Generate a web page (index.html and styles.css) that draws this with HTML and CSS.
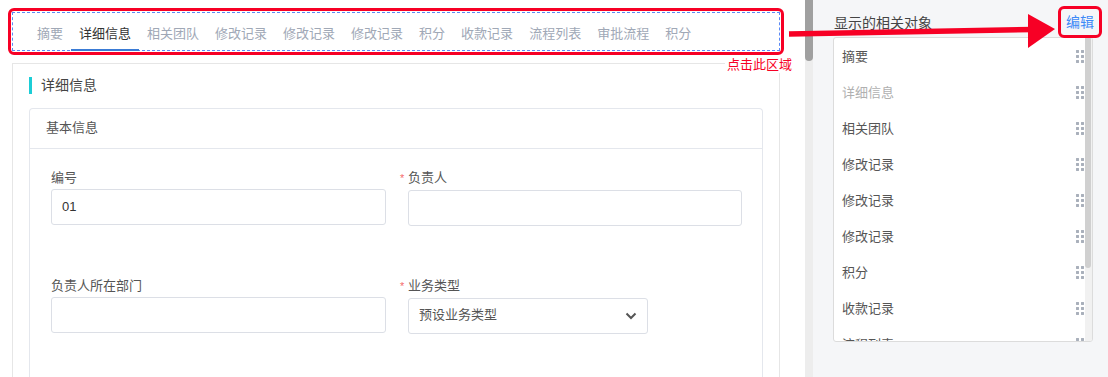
FILE: index.html
```html
<!DOCTYPE html>
<html lang="zh-CN">
<head>
<meta charset="utf-8">
<title>详细信息</title>
<link rel="stylesheet" href="styles.css">
</head>
<body>
<div class="page">
  <main class="main">
    <div class="tabs-frame">
      <nav class="tabs">
        <span class="tab">摘要</span>
        <span class="tab active">详细信息</span>
        <span class="tab">相关团队</span>
        <span class="tab">修改记录</span>
        <span class="tab">修改记录</span>
        <span class="tab">修改记录</span>
        <span class="tab">积分</span>
        <span class="tab">收款记录</span>
        <span class="tab">流程列表</span>
        <span class="tab">审批流程</span>
        <span class="tab">积分</span>
      </nav>
    </div>
    <section class="card">
      <h2 class="card-title">详细信息</h2>
      <div class="panel">
        <div class="panel-head">基本信息</div>
        <div class="panel-body">
          <div class="field">
            <label class="label">编号</label>
            <div class="input">01</div>
          </div>
          <div class="field">
            <label class="label"><span class="req">*</span>负责人</label>
            <div class="input"></div>
          </div>
          <div class="field">
            <label class="label">负责人所在部门</label>
            <div class="input"></div>
          </div>
          <div class="field">
            <label class="label"><span class="req">*</span>业务类型</label>
            <div class="input select">
              <span>预设业务类型</span>
              <svg class="chev" width="12" height="8" viewBox="0 0 12 8"><path d="M1.5 1.5 L6 6 L10.5 1.5" fill="none" stroke="#555" stroke-width="2"/></svg>
            </div>
          </div>
        </div>
      </div>
    </section>
  </main>
  <div class="scrollbar"><div class="scrollbar-thumb"></div></div>
  <aside class="side">
    <div class="side-head">
      <span class="side-title">显示的相关对象</span>
      <span class="edit">编辑</span>
    </div>
    <div class="list-card">
      <ul class="list">
        <li class="item"><span>摘要</span><i class="grip"></i></li>
        <li class="item disabled"><span>详细信息</span><i class="grip"></i></li>
        <li class="item"><span>相关团队</span><i class="grip"></i></li>
        <li class="item"><span>修改记录</span><i class="grip"></i></li>
        <li class="item"><span>修改记录</span><i class="grip"></i></li>
        <li class="item"><span>修改记录</span><i class="grip"></i></li>
        <li class="item"><span>积分</span><i class="grip"></i></li>
        <li class="item"><span>收款记录</span><i class="grip"></i></li>
        <li class="item"><span>流程列表</span><i class="grip"></i></li>
        <li class="item"><span>审批流程</span><i class="grip"></i></li>
        <li class="item"><span>积分</span><i class="grip"></i></li>
      </ul>
      <div class="list-scroll"><div class="list-thumb"></div></div>
    </div>
  </aside>

  <span class="hint">点击此区域</span>
  <svg class="arrow" width="1108" height="60" viewBox="0 0 1108 60">
    <line x1="789" y1="34" x2="1034" y2="29.5" stroke="#f70025" stroke-width="5.5"/>
    <polygon points="1028,14 1055,29 1028,48" fill="#f70025"/>
  </svg>
</div>
</body>
</html>
```

FILE: styles.css
```css
* { box-sizing: border-box; }
html, body { margin: 0; padding: 0; }
body {
  font-family: "Liberation Sans", "Noto Sans CJK SC", sans-serif;
  font-size: 13px;
  color: #333;
  background: #fff;
}
.page {
  position: relative;
  display: flex;
  width: 1108px;
  height: 377px;
  overflow: hidden;
}
.main {
  width: 805px;
  flex: none;
  background: #fff;
  overflow: hidden;
}
.tabs-frame {
  margin: 8px 21px 0 8px;
  border: 3px solid #f70025;
  border-radius: 6px;
  padding: 1px;
}
.tabs {
  display: flex;
  align-items: flex-start;
  border: 1px dashed #5b8af5;
  padding-left: 16px;
  height: 39px;
}
.tab {
  position: relative;
  padding: 12px 8px 6px;
  line-height: 18px;
  font-size: 13px;
  color: #a0a8b6;
  border-bottom: 2px solid transparent;
  white-space: nowrap;
}
.tab.active {
  color: #333;
  border-bottom-color: #3a7bd5;
}
.card {
  margin: 8px 25px 0 12px;
  border: 1px solid #e6e6e6;
  border-bottom: none;
  padding: 13px 16px 0;
  height: 320px;
}
.card-title {
  margin: 0;
  font-size: 14px;
  font-weight: normal;
  line-height: 17px;
  color: #444;
  border-left: 3px solid #1ccdd6;
  padding-left: 9px;
}
.panel {
  margin-top: 14px;
  border: 1px solid #e4e7ed;
  border-bottom: none;
  border-radius: 4px 4px 0 0;
  height: 280px;
}
.panel-head {
  height: 40px;
  line-height: 38px;
  border-bottom: 1px solid #e4e7ed;
  padding-left: 16px;
  color: #555;
  font-size: 13px;
}
.panel-body {
  display: grid;
  grid-template-columns: 335px 334px;
  column-gap: 22px;
  row-gap: 51px;
  padding: 20px 22px 0 21px;
}
.field { display: flex; flex-direction: column; align-items: flex-start; }
.label {
  font-size: 13px;
  line-height: 17px;
  color: #555;
  margin-bottom: 3px;
}
.req {
  color: #f56c6c;
  font-size: 11px;
  margin-left: -8px;
  display: inline-block;
  width: 8px;
}
.input {
  width: 100%;
  height: 36px;
  border: 1px solid #dcdfe6;
  border-radius: 3px;
  padding: 0 10px;
  line-height: 33px;
  font-size: 13px;
  color: #333;
  background: #fff;
}
.select {
  width: 240px;
  display: flex;
  align-items: center;
  justify-content: space-between;
  color: #555;
}
.select span { line-height: 18px; margin-top: -2px; }
.chev { display: block; }
.scrollbar {
  width: 8px;
  flex: none;
  background: #ededed;
}
.scrollbar-thumb {
  height: 61px;
  background: #a0a0a0;
  border-radius: 0 0 4px 4px;
}
.side {
  flex: 1;
  background: #f5f6f8;
  padding: 13px 15px 0 20px;
}
.side-head {
  display: flex;
  justify-content: space-between;
  align-items: flex-start;
  height: 20px;
  margin-bottom: 4px;
}
.side-title {
  font-size: 14px;
  line-height: 20px;
  color: #444;
  padding-left: 1px;
}
.edit {
  font-size: 14px;
  line-height: 20px;
  color: #3d8af7;
  border: 3px solid #f70025;
  border-radius: 6px;
  padding: 3px 5px;
  margin: -7px -9px 0 0;
  background: #f5f6f8;
  position: relative;
  z-index: 2;
}
.list-card {
  display: flex;
  height: 305px;
  width: 260px;
  background: #fff;
  border: 1px solid #dcdcdc;
  border-radius: 3px;
  overflow: hidden;
}
.list {
  flex: 1;
  margin: 0;
  padding: 0;
  list-style: none;
  overflow: hidden;
}
.item {
  height: 36px;
  display: flex;
  align-items: center;
  justify-content: space-between;
  padding: 0 1px 2px 8px;
  font-size: 13px;
  color: #555;
}
.item.disabled { color: #b0b0b0; }
.grip {
  width: 8px;
  height: 13px;
  margin-top: 3px;
  background-image: radial-gradient(circle, #a9b0bb 1.4px, transparent 1.6px);
  background-size: 5px 5px;
  background-position: -1px -1px;
}
.list-scroll {
  width: 7px;
  flex: none;
  background: #f1f1f1;
}
.list-thumb {
  width: 6px;
  height: 230px;
  background: #d0d0d0;
  border-radius: 0 0 3px 3px;
}
.hint {
  position: absolute;
  left: 725px;
  top: 56px;
  padding: 0 2px;
  font-size: 13px;
  line-height: 17px;
  color: #f70025;
  background: #fff;
}
.arrow {
  position: absolute;
  left: 0;
  top: 0;
  pointer-events: none;
}
```
